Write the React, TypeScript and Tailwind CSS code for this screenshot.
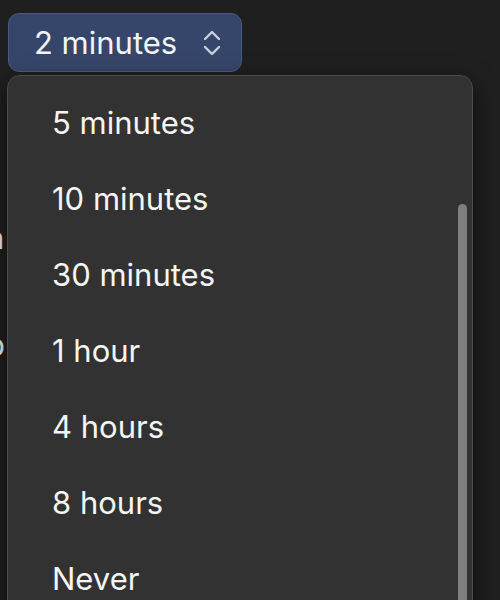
import React from "react";

const items = ["5 minutes", "10 minutes", "30 minutes", "1 hour", "4 hours", "8 hours", "Never"];

export default function App() {
  return (
    <div
      className="relative w-[500px] h-[600px] overflow-hidden bg-[#1f1f1f] text-white"
      style={{ fontFamily: "Inter, 'Noto Sans', sans-serif" }}
    >
      {/* background page content (mostly hidden behind popup) */}
      <div className="pl-[8px] pt-[13px]">
        <button className="flex h-[59px] w-[234px] items-center justify-between rounded-[11px] border border-[#4a5b80] bg-[#36466a] pl-[25px] pr-[20px] text-[31px] leading-none text-[#f2f4f8]">
          <span className="-mt-[1px]">2 minutes</span>
          <svg width="18" height="28" viewBox="0 0 18 28" fill="none" stroke="#c9cfdb" strokeWidth="2.4" strokeLinecap="round" strokeLinejoin="round">
            <path d="M2 10 L9 3 L16 10" />
            <path d="M2 18 L9 25 L16 18" />
          </svg>
        </button>
      </div>
      <div className="mt-[150px] flex flex-col text-[31px] leading-none text-[#ececec]">
        <span className="ml-[-14px]">n</span>
        <span className="ml-[-14px] mt-[76px]">p</span>
        <span className="ml-[-14px] mt-[150px]">r</span>
      </div>

      {/* popup menu */}
      <div className="absolute left-[7px] top-[75px] h-[560px] w-[466px] rounded-[13px] border border-[#4a4a4a] bg-[#323232] shadow-[0_8px_24px_rgba(0,0,0,0.5)]">
        <div className="flex flex-col pt-[9px]">
          {items.map((it) => (
            <div key={it} className="flex h-[76px] items-center pl-[44px] text-[31px] leading-none text-[#f5f5f5]">
              <span className="-mt-[1px]">{it}</span>
            </div>
          ))}
        </div>
        <div className="absolute right-[5px] top-[128px] h-[420px] w-[9px] rounded-full bg-[#7f7f7f]" />
      </div>
    </div>
  );
}
